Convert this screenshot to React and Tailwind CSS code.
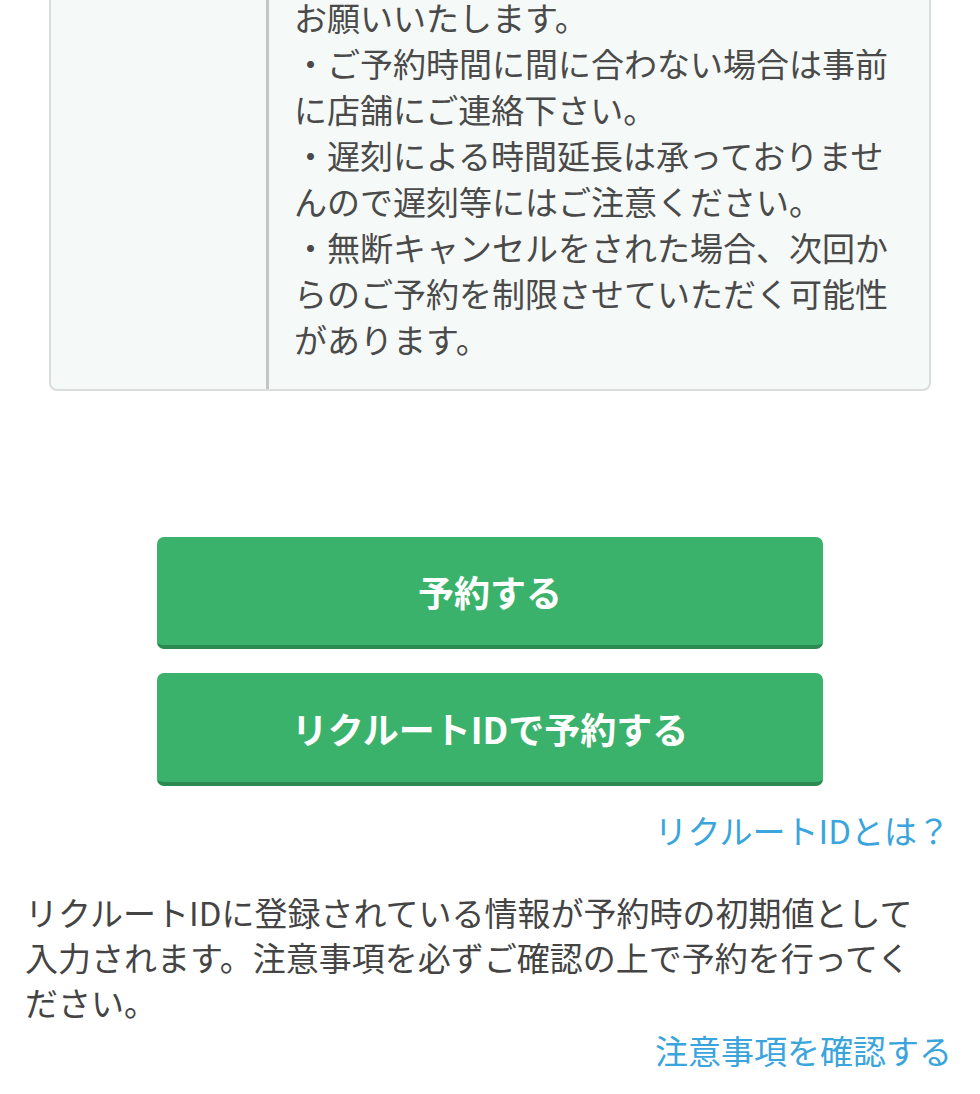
const NOTES = [
  "お願いいたします。",
  "・ご予約時間に間に合わない場合は事前に店舗にご連絡下さい。",
  "・遅刻による時間延長は承っておりませんので遅刻等にはご注意ください。",
  "・無断キャンセルをされた場合、次回からのご予約を制限させていただく可能性があります。",
];

export default function App() {
  return (
    <div
      className="min-h-[1094px] bg-white overflow-hidden"
      style={{ fontFamily: '"Noto Sans CJK JP", "Noto Sans", sans-serif' }}
    >
      {/* Notes table (scrolled, top is above the viewport) */}
      <div className="mx-[49px] -mt-[40px] flex border-2 border-[#d9dddc] rounded-[8px] bg-[#f5f9f7]">
        <div className="w-[215px] shrink-0" />
        <div className="w-[3px] shrink-0 bg-[#c4c6c6]" />
        <div className="flex-1 pl-[25px] pr-[27px] pt-[32px] pb-[27px] text-[33px] leading-[46px] text-[#4a4a4a]">
          {NOTES.map((n, i) => (
            <p key={i}>{n}</p>
          ))}
        </div>
      </div>

      {/* Buttons */}
      <div className="mt-[146px] flex flex-col items-center gap-[24px]">
        <button className="w-[666px] h-[112px] rounded-[7px] bg-[#3bb26c] border-b-[4px] border-[#2a8a50] text-white text-[36px] font-bold flex items-center justify-center">
          予約する
        </button>
        <button className="w-[666px] h-[113px] rounded-[7px] bg-[#3bb26c] border-b-[4px] border-[#2a8a50] text-white text-[36px] font-bold flex items-center justify-center">
          リクルートIDで予約する
        </button>
      </div>

      <div className="mt-[21px] pr-[30px] text-right text-[33px] leading-[46px] text-[#3aa5dc]">
        リクルートIDとは？
      </div>

      <p className="mt-[37px] pl-[25px] pr-[55px] text-[33px] leading-[45px] text-[#444444]">
        リクルートIDに登録されている情報が予約時の初期値として入力されます。注意事項を必ずご確認の上で予約を行ってください。
      </p>

      <div className="mt-[2px] pr-[28px] text-right text-[33px] leading-[46px] text-[#3aa5dc]">
        注意事項を確認する
      </div>
    </div>
  );
}
